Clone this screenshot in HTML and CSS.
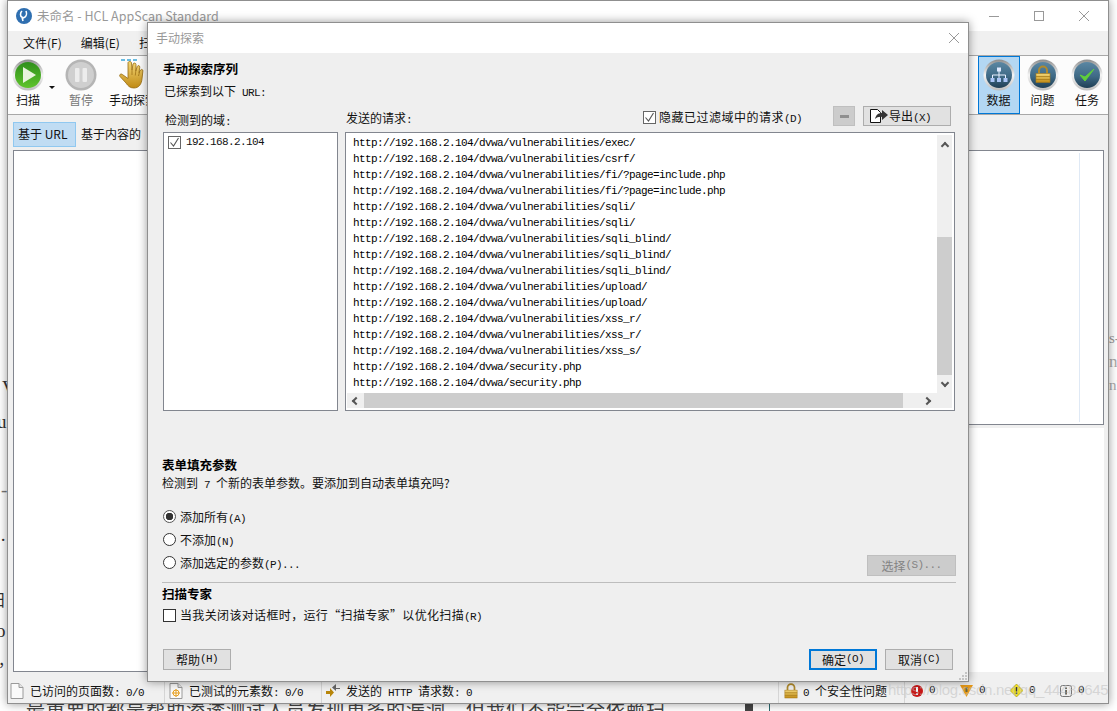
FILE: index.html
```html
<!DOCTYPE html>
<html lang="zh-CN">
<head>
    <meta charset="UTF-8">
    <title>手动探索 - HCL AppScan Standard</title>
    <link rel="stylesheet" href="styles.css">
</head>
<body>
    <svg class="defs" aria-hidden="true">
        <defs>
            <linearGradient id="ring" x1="0" y1="0" x2="0" y2="1">
                <stop offset="0" stop-color="#8d8d8d"/><stop offset="0.5" stop-color="#f4f4f4"/><stop offset="1" stop-color="#bdbdbd"/>
            </linearGradient>
            <linearGradient id="navy" x1="0" y1="0" x2="0" y2="1">
                <stop offset="0" stop-color="#5b87a3"/><stop offset="0.55" stop-color="#3f6a86"/><stop offset="1" stop-color="#1f3f55"/>
            </linearGradient>
            <linearGradient id="green" x1="0" y1="0" x2="0" y2="1">
                <stop offset="0" stop-color="#2f8f1c"/><stop offset="1" stop-color="#5fc42c"/>
            </linearGradient>
            <linearGradient id="gold" x1="0" y1="0" x2="0" y2="1">
                <stop offset="0" stop-color="#f4d777"/><stop offset="1" stop-color="#c08a14"/>
            </linearGradient>
            <symbol id="orb" viewBox="0 0 32 32">
                <circle cx="16" cy="16" r="15.5" fill="url(#ring)"/>
                <circle cx="16" cy="16" r="13" fill="url(#navy)"/>
            </symbol>
            <symbol id="lock" viewBox="0 0 16 18">
                <path d="M4 8V5a4 4 0 0 1 8 0v3" fill="none" stroke="#b08a2c" stroke-width="2"/>
                <rect x="1" y="8" width="14" height="9" fill="url(#gold)" stroke="#a87c1c" stroke-width="0.6"/>
                <path d="M1 11h14M1 14h14" stroke="#a87c1c" stroke-width="0.8"/>
            </symbol>
            <symbol id="page" viewBox="0 0 14 16">
                <path d="M1 .5h8l4 4v11H1z" fill="#fafafa" stroke="#9a9a9a"/>
                <path d="M9 .5v4h4" fill="#e4e4e4" stroke="#9a9a9a"/>
            </symbol>
        </defs>
    </svg>

    <span class="frag frag-v">V</span>
    <span class="frag frag-u">u</span>
    <span class="frag frag-dash">-</span>
    <span class="frag frag-dot">·</span>
    <span class="frag frag-sao">扫</span>
    <span class="frag frag-o">o</span>
    <span class="frag frag-comma">，</span>
    <span class="frag frag-r1">s-</span>
    <span class="frag frag-r2">n</span>
    <span class="frag frag-r3">n'</span>
    <span class="frag frag-bar"></span>
    <span class="frag frag-line"></span>
    <p class="article-line">，最重要的都是帮助渗透测试人员发现更多的漏洞，但我们不能完全依赖扫</p>

    <div class="window main-window">
        <div class="titlebar">
            <svg class="app-icon" width="16" height="16" viewBox="0 0 16 16">
                <circle cx="8" cy="8" r="8" fill="#2f6fb0"/>
                <path d="M6 3c-2 2-2 5 0 6l1 4M10 3c1 3 1 4-1 6l-2 1" fill="none" stroke="#fff" stroke-width="1.6"/>
            </svg>
            <span class="app-title">未命名 - HCL AppScan Standard</span>
            <div class="win-controls">
                <svg width="12" height="12" viewBox="0 0 12 12"><path d="M1 6.5h10" stroke="#999"/></svg>
                <svg width="12" height="12" viewBox="0 0 12 12"><rect x="1.500" y="1.500" width="9" height="9" fill="none" stroke="#999"/></svg>
                <svg width="12" height="12" viewBox="0 0 12 12"><path d="M1 1l10 10M11 1L1 11" stroke="#999"/></svg>
            </div>
        </div>

        <div class="menubar">
            <span>文件(F)</span>
            <span>编辑(E)</span>
            <span>扫描(S)</span>
        </div>

        <div class="toolbar">
            <div class="tool">
                <svg width="32" height="32" viewBox="0 0 32 32">
                    <circle cx="16" cy="16" r="15.500" fill="url(#ring)"/>
                    <circle cx="16" cy="16" r="13" fill="url(#green)"/>
                    <path d="M11 8l13 8-13 8z" fill="#e8f4dc"/>
                </svg>
                <span>扫描</span>
            </div>
            <span class="caret"></span>
            <div class="tool tool-off">
                <svg width="32" height="32" viewBox="0 0 32 32">
                    <circle cx="16" cy="16" r="15.500" fill="#b5b5b5"/>
                    <circle cx="16" cy="16" r="13" fill="#cfcfcf"/>
                    <rect x="10" y="9" width="4.500" height="14" rx="1" fill="#ececec"/>
                    <rect x="17.500" y="9" width="4.500" height="14" rx="1" fill="#ececec"/>
                </svg>
                <span>暂停</span>
            </div>
            <div class="tool tool-wide">
                <svg width="32" height="32" viewBox="0 0 32 32">
                    <path d="M4 1h4M10 1h4M16 1h4" stroke="#3aa7d8" stroke-width="1.400"/>
                    <path d="M11 4c0-2 3.500-2 3.500 0l.5 7 1-6c.5-1.500 3-1.200 3 .5l-.2 6.500 1.400-4.500c.6-1.500 2.800-1 2.600.7l-.8 5.300 1.500-2.500c.8-1.200 2.700-.5 2.400 1L25 20c-.5 5-3 9-8 9-4 0-6-2-8-5l-6-6.500c-1.200-1.500.8-3.300 2.400-2l5.600 4z" fill="url(#gold)" stroke="#96690f" stroke-width="0.800"/>
                    <path d="M15 11v5M18.800 12l-.5 4.500M22.500 13l-1 4" fill="none" stroke="#96690f" stroke-width="0.700"/>
                </svg>
                <span>手动探索</span>
            </div>
            <div class="tool-group">
                <div class="tool tool-active">
                    <svg width="32" height="32" viewBox="0 0 32 32">
                        <use href="#orb"/>
                        <path d="M16 12v3M9.500 19v-3h13v3M16 15v4" fill="none" stroke="#e8f0ff"/>
                        <rect x="14" y="8.500" width="4" height="4" fill="#dfe9ff"/>
                        <rect x="7.500" y="19" width="4" height="4" fill="#a9c4f5"/>
                        <rect x="14" y="19" width="4" height="4" fill="#a9c4f5"/>
                        <rect x="20.500" y="19" width="4" height="4" fill="#a9c4f5"/>
                    </svg>
                    <span>数据</span>
                </div>
                <div class="tool">
                    <svg width="32" height="32" viewBox="0 0 32 32">
                        <use href="#orb"/>
                        <use href="#lock" x="8" y="6" width="16" height="19"/>
                    </svg>
                    <span>问题</span>
                </div>
                <div class="tool">
                    <svg width="32" height="32" viewBox="0 0 32 32">
                        <use href="#orb"/>
                        <path d="M9 16l5 6 9-12-9 8z" fill="#5fd03a" stroke="#5fd03a"/>
                    </svg>
                    <span>任务</span>
                </div>
            </div>
        </div>

        <div class="tabs">
            <span class="tab tab-on">基于 URL</span>
            <span class="tab">基于内容的</span>
        </div>

        <div class="workspace">
            <div class="tree-pane"></div>
            <div class="detail-pane"><div class="detail-col"></div></div>
            <div class="report-pane"></div>
        </div>

        <div class="statusbar">
            <div class="stat stat-pages">
                <svg width="14" height="16"><use href="#page"/></svg>
                <span>已访问的页面数<span class="m">: 0/0</span></span>
            </div>
            <div class="stat stat-elements">
                <svg width="14" height="16" viewBox="0 0 14 16">
                    <use href="#page" width="14" height="16"/>
                    <circle cx="7" cy="10" r="3" fill="none" stroke="#e8a020"/>
                    <path d="M7 6v8M3 10h8" stroke="#e8a020"/>
                </svg>
                <span>已测试的元素数<span class="m">: 0/0</span></span>
            </div>
            <div class="stat stat-http">
                <svg width="14" height="14" viewBox="0 0 14 14">
                    <path d="M0 7h4V4l4 4.500-4 4.500v-3H0z" fill="#b8860b"/>
                    <path d="M14 4h-4V0L6 3.500 10 7V5h4z" fill="#666"/>
                </svg>
                <span>发送的<span class="m"> HTTP </span>请求数<span class="m">: 0</span></span>
            </div>
            <div class="stat stat-issues">
                <svg width="14" height="16"><use href="#lock" width="14" height="16"/></svg>
                <span><span class="m">0 </span>个安全性问题</span>
            </div>
            <div class="stat stat-counts">
                <svg width="12" height="12" viewBox="0 0 12 12"><circle cx="6" cy="6" r="6" fill="#c81818"/><path d="M6 2v5M6 8.500v1.500" stroke="#fff" stroke-width="2"/></svg>
                <span class="m">0</span>
                <svg width="13" height="12" viewBox="0 0 13 12"><path d="M0 0h13L6.500 12z" fill="#e89a18"/><path d="M6.500 2v5" stroke="#664" stroke-width="2"/></svg>
                <span class="m">0</span>
                <svg width="13" height="13" viewBox="0 0 13 13"><path d="M6.500 0L13 6.500 6.500 13 0 6.500z" fill="#f2e020" stroke="#998a10" stroke-width="0.600"/><path d="M6.500 3v4.500M6.500 8.500V10" stroke="#333" stroke-width="1.500"/></svg>
                <span class="m">0</span>
                <svg width="12" height="12" viewBox="0 0 12 12"><rect x="0.500" y="0.500" width="11" height="11" rx="2" fill="#eee" stroke="#777"/><path d="M6 2.500v1.500M6 5v4.500" stroke="#444" stroke-width="2"/></svg>
                <span class="m">0</span>
            </div>
        </div>
    </div>

    <div class="window dialog">
        <div class="dialog-title">
            <span>手动探索</span>
            <svg width="12" height="12" viewBox="0 0 12 12"><path d="M1 1l10 10M11 1L1 11" stroke="#999"/></svg>
        </div>

        <div class="dialog-body">
            <div class="sequence">
                <h3>手动探索序列</h3>
                <p class="found">已探索到以下<span class="m"> URL:</span></p>

                <div class="panes">
                    <div class="pane-left">
                        <div class="pane-label"><span>检测到的域<span class="m">:</span></span></div>
                        <div class="list domain-list">
                            <span class="check check-on"><svg width="11" height="11" viewBox="0 0 11 11"><path d="M1.500 5.500l3 3.500 5-8" fill="none" stroke="#555" stroke-width="1.100"/></svg></span>
                            <span class="m">192.168.2.104</span>
                        </div>
                    </div>
                    <div class="pane-right">
                        <div class="pane-head">
                            <span>发送的请求<span class="m">:</span></span>
                            <label class="hide-filter">
                                <span class="check check-on"><svg width="11" height="11" viewBox="0 0 11 11"><path d="M1.500 5.500l3 3.500 5-8" fill="none" stroke="#555" stroke-width="1.100"/></svg></span>
                                <span>隐藏已过滤域中的请求<span class="m">(D)</span></span>
                            </label>
                            <button class="minus-btn" type="button"><span></span></button>
                            <button class="btn export-btn" type="button">
                                <svg width="20" height="16" viewBox="0 0 20 16">
                                    <path d="M1.500 1.500h7l3 3v10h-10z" fill="#fff" stroke="#111"/>
                                    <path d="M6 11c1-4 3-6 7-6V2l6 5-6 5V9c-3-.5-5 .5-7 2z" fill="#333"/>
                                </svg>
                                <span>导出<span class="m">(X)</span></span>
                            </button>
                        </div>
                        <div class="list request-list">
                            <div class="rows" id="rows"></div>
                            <div class="vscroll">
                                <i class="arrow arrow-up"></i>
                                <div class="vthumb"></div>
                                <i class="arrow arrow-down"></i>
                            </div>
                            <div class="hscroll">
                                <i class="arrow arrow-left"></i>
                                <div class="hthumb"></div>
                                <i class="arrow arrow-right"></i>
                            </div>
                        </div>
                    </div>
                </div>
            </div>

            <h3 class="form-heading">表单填充参数</h3>
            <p class="line">检测到<span class="m"> 7 </span>个新的表单参数。要添加到自动表单填充吗?</p>

            <div class="radios">
                <div class="radio-row"><span class="radio radio-on"></span><span>添加所有<span class="m">(A)</span></span></div>
                <div class="radio-row"><span class="radio"></span><span>不添加<span class="m">(N)</span></span></div>
                <div class="radio-row">
                    <span class="radio"></span><span>添加选定的参数<span class="m">(P)...</span></span>
                    <button class="btn select-btn" type="button" disabled>选择<span class="m">(S)...</span></button>
                </div>
            </div>

            <hr class="rule">
            <h3 class="expert-heading">扫描专家</h3>
            <div class="expert-row">
                <span class="check"></span>
                <span class="expert-text">当我关闭该对话框时，运行“扫描专家”以优化扫描<span class="m">(R)</span></span>
            </div>

            <div class="dialog-foot">
                <button class="btn" type="button">帮助<span class="m">(H)</span></button>
                <button class="btn btn-default" type="button">确定<span class="m">(O)</span></button>
                <button class="btn" type="button">取消<span class="m">(C)</span></button>
            </div>
            <svg class="grip" width="9" height="9" viewBox="0 0 9 9">
                <path d="M7 1h2v2H7zM4 4h2v2H4zM7 4h2v2H7zM1 7h2v2H1zM4 7h2v2H4zM7 7h2v2H7z" fill="#c4c4c4"/>
            </svg>
        </div>
    </div>

    <span class="watermark">https://blog.csdn.net/qq_44484645</span>

    <script>
        const urls = [
            'exec/', 'csrf/', 'fi/?page=include.php', 'fi/?page=include.php',
            'sqli/', 'sqli/', 'sqli_blind/', 'sqli_blind/', 'sqli_blind/',
            'upload/', 'upload/', 'xss_r/', 'xss_r/', 'xss_s/'
        ];
        const rows = document.getElementById('rows');
        const base = 'http://192.168.2.104/dvwa/';
        urls.map(u => base + 'vulnerabilities/' + u)
            .concat([base + 'security.php', base + 'security.php'])
            .forEach(u => {
                const row = document.createElement('div');
                row.className = 'row';
                row.textContent = u;
                rows.appendChild(row);
            });
    </script>
</body>
</html>
```

FILE: styles.css
```css
* {
    box-sizing: border-box;
}
html, body {
    margin: 0;
    height: 100%;
}
body {
    position: relative;
    width: 1117px;
    height: 711px;
    overflow: hidden;
    background: #fff;
    color: #111;
    font-family: "Noto Sans CJK SC", "Noto Sans", sans-serif;
    font-size: 12px;
    line-height: 16px;
}
.defs {
    position: absolute;
    width: 0;
    height: 0;
}
h3, p {
    margin: 0;
}
/* Latin in the old dialogs: tall and 6px a character */
.m {
    font-family: "Liberation Mono", "DejaVu Sans Mono", monospace;
    font-size: 11px;
    line-height: 1;
    letter-spacing: -0.6px;
    white-space: pre;
}

/* bits of the page behind the windows */
.frag {
    position: absolute;
    font-family: "Liberation Serif", serif;
    font-size: 19px;
    line-height: 20px;
    color: #333;
}
.frag-v { left: 2px; top: 378px; }
.frag-u { left: -3px; top: 412px; }
.frag-dash { left: 1px; top: 480px; color: #777; }
.frag-dot { left: 0; top: 530px; }
.frag-sao { left: -12px; top: 589px; font-family: "Noto Sans CJK SC", sans-serif; font-size: 17px; }
.frag-o { left: -4px; top: 621px; }
.frag-comma { left: -2px; top: 650px; font-family: "Noto Sans CJK SC", sans-serif; font-size: 15px; }
.frag-r1 { left: 1109px; top: 328px; font-size: 15px; color: #999; }
.frag-r2 { left: 1109px; top: 352px; font-size: 17px; color: #aaa; }
.frag-r3 { left: 1109px; top: 375px; font-size: 15px; color: #aaa; }
.frag-bar { left: 745px; top: 700px; width: 8px; height: 11px; background: #444; }
.frag-line { left: 769px; top: 700px; width: 1px; height: 11px; background: #2c6a70; }
.article-line {
    position: absolute;
    left: 6px;
    top: 696px;
    white-space: nowrap;
    font-size: 19px;
    line-height: 26px;
    letter-spacing: 1px;
    color: #444;
}

/* windows on the desktop */
.window {
    position: absolute;
    display: flex;
    flex-direction: column;
    border: 1px solid #8f8f8f;
    box-shadow: 0 0 9px rgba(0, 0, 0, 0.4);
}
.main-window {
    left: 7px;
    top: 0;
    width: 1102px;
    height: 704px;
    background: #f0f0f0;
}
.dialog {
    left: 147px;
    top: 22px;
    width: 822px;
    height: 660px;
    background: #efefef;
}

/* main window */
.titlebar {
    display: flex;
    align-items: center;
    height: 30px;
    background: #fff;
    padding-left: 8px;
    flex: none;
}
.app-title {
    margin-left: 5px;
    color: #999;
    font-size: 12.500px;
}
.win-controls {
    display: flex;
    gap: 33px;
    margin-left: auto;
    padding-right: 18px;
}
.menubar {
    display: flex;
    gap: 19px;
    align-items: center;
    height: 25px;
    padding-left: 15px;
    border-bottom: 1px solid #a8a8a8;
    flex: none;
}
.toolbar {
    display: flex;
    height: 59px;
    background: #fcfcfc;
    border-bottom: 1px solid #a8a8a8;
    flex: none;
}
.tool {
    display: flex;
    flex-direction: column;
    align-items: center;
    width: 40px;
    height: 58px;
    padding-top: 3px;
    white-space: nowrap;
}
.tool svg {
    flex: none;
}
.tool span {
    margin-top: 1px;
}
.tool-off {
    margin-right: 8px;
}
.tool-off span {
    color: #777;
}
.tool-wide {
    width: 48px;
}
.caret {
    align-self: flex-start;
    width: 6px;
    height: 0;
    margin: 30px 6px 0 1px;
    border: 3px solid transparent;
    border-top: 3px solid #111;
    border-bottom: 0;
}
.tool-group {
    display: flex;
    gap: 2px;
    margin-left: auto;
}
.tool-group .tool {
    width: 42px;
}
.tool-group .tool:nth-child(2) {
    padding-right: 1px;
}
.tool-group .tool-active {
    padding-right: 1px;
}
.tool-active {
    background: #b3d7f3;
    border: 1px solid #0078d7;
    padding-top: 2px;
}
.tabs {
    display: flex;
    align-items: center;
    gap: 0;
    height: 34px;
    padding: 6px 0 2px 5px;
    flex: none;
}
.tab {
    display: flex;
    align-items: center;
    height: 25px;
    padding: 0 4px;
    border: 1px solid transparent;
}
.tab-on {
    width: 63px;
    background: #c0dcf3;
    border-color: #90c8f0;
}
.workspace {
    flex: 1;
    display: grid;
    grid-template-columns: 300px 1fr;
    grid-template-rows: 275px 1fr;
    row-gap: 3px;
    padding: 1px 4px 0 5px;
    min-height: 0;
}
.tree-pane {
    grid-row: 1 / 3;
    background: #fff;
    border: 1px solid #82868f;
}
.detail-pane {
    background: #fff;
    border: 1px solid #82868f;
    padding: 2px 23px 2px 0;
}
.detail-col {
    height: 100%;
    border-right: 1px solid #dfe9f5;
}
.report-pane {
    background: #fff;
}
.statusbar {
    display: flex;
    align-items: center;
    height: 31px;
    padding-top: 6px;
    flex: none;
}
.stat {
    display: flex;
    align-items: center;
    gap: 6px;
    height: 24px;
    padding-left: 2px;
    border-left: 1px solid #d5d5d5;
    white-space: nowrap;
}
.stat-pages { width: 156px; border-left: 0; }
.stat-elements { width: 157px; padding-left: 4px; }
.stat-http { width: 457px; padding-left: 4px; }
.stat-issues { width: 126px; padding-left: 5px; gap: 5px; }
.stat-counts { padding-left: 6px; gap: 6px; }
.stat-counts .m { margin-right: 19px; }

/* dialog */
.dialog-title {
    display: flex;
    align-items: center;
    justify-content: space-between;
    height: 30px;
    padding: 0 8px 0 8px;
    background: #fff;
    color: #999;
    font-size: 12px;
    flex: none;
}
.dialog-body {
    position: relative;
    flex: 1;
    display: flex;
    flex-direction: column;
    padding: 0 12px 11px 14px;
    min-height: 0;
}
.sequence {
    padding-left: 1px;
}
h3 {
    font-size: 12.500px;
    line-height: 16px;
    font-weight: 700;
    color: #000;
}
.sequence h3 {
    margin-top: 8px;
}
.found {
    height: 16px;
    margin-top: 6px;
    padding-left: 1px;
}
.panes {
    display: grid;
    grid-template-columns: 175px 610px;
    column-gap: 7px;
}
.pane-label {
    height: 33px;
    padding: 13px 0 0 2px;
}
.pane-head {
    display: flex;
    align-items: flex-start;
    height: 33px;
    padding: 7px 4px 0 1px;
}
.pane-head > span {
    margin-top: 4px;
}
.hide-filter {
    display: flex;
    align-items: center;
    gap: 3px;
    margin: 3px 31px 0 auto;
    letter-spacing: 0.5px;
}
.list {
    height: 279px;
    background: #fff;
    border: 1px solid #82868f;
}
.domain-list {
    display: flex;
    align-items: flex-start;
    gap: 5px;
    padding: 3px 0 0 4px;
}
.domain-list .m {
    line-height: 13px;
}
.check {
    display: inline-flex;
    align-items: center;
    justify-content: center;
    width: 13px;
    height: 13px;
    background: #fff;
    border: 1px solid #333;
    flex: none;
}
.check-on {
    border-color: #666;
}
.request-list {
    position: relative;
    padding: 2px 0 0 7px;
    overflow: hidden;
}
.row {
    height: 16px;
    line-height: 16px;
    font-family: "Liberation Mono", "DejaVu Sans Mono", monospace;
    font-size: 11px;
    letter-spacing: -0.6px;
    color: #000;
    white-space: nowrap;
}

/* scrollbars and small buttons lie over the list */
.vscroll {
    position: absolute;
    top: 2px;
    right: 2px;
    bottom: 17px;
    width: 15px;
    background: #efefef;
}
.vthumb {
    position: absolute;
    top: 102px;
    left: 0;
    width: 15px;
    height: 138px;
    background: #cdcdcd;
}
.hscroll {
    position: absolute;
    left: 1px;
    right: 2px;
    bottom: 2px;
    height: 15px;
    background: #efefef;
}
.hthumb {
    position: absolute;
    left: 17px;
    top: 0;
    width: 539px;
    height: 15px;
    background: #cdcdcd;
}
.arrow {
    position: absolute;
    width: 6px;
    height: 6px;
    border-top: 2px solid #555;
    border-left: 2px solid #555;
}
.arrow-up { top: 8px; left: 5px; transform: rotate(45deg); }
.arrow-down { bottom: 7px; left: 5px; transform: rotate(225deg); }
.arrow-left { left: 6px; top: 5px; transform: rotate(-45deg); }
.arrow-right { right: 22px; top: 5px; transform: rotate(135deg); }

.btn {
    display: inline-flex;
    align-items: center;
    justify-content: center;
    height: 21px;
    width: 68px;
    padding: 0;
    background: #e1e1e1;
    border: 1px solid #adadad;
    font: inherit;
    color: #111;
}
.minus-btn {
    display: flex;
    align-items: center;
    justify-content: center;
    width: 22px;
    height: 20px;
    padding: 0;
    background: #cccccc;
    border: 1px solid #bfbfbf;
}
.minus-btn span {
    width: 9px;
    height: 3px;
    background: #8f8f8f;
}
.export-btn {
    justify-content: flex-start;
    width: 88px;
    height: 20px;
    margin-left: 8px;
    padding-left: 5px;
    gap: 0;
}
.form-heading {
    margin-top: 46px;
}
.line {
    height: 16px;
    margin-top: 2px;
}
.radios {
    margin-top: 14px;
}
.radio-row {
    display: flex;
    align-items: center;
    gap: 4px;
    height: 23px;
    padding-left: 1px;
}
.radio {
    width: 13px;
    height: 13px;
    border: 1px solid #333;
    border-radius: 50%;
    background: #fff;
    flex: none;
}
.radio-on {
    border-color: #555;
    background: radial-gradient(circle, #333 0 3.500px, #fff 4px);
}
.select-btn {
    width: 89px;
    margin: 3px 0 -3px auto;
    background: #cccccc;
    border-color: #bfbfbf;
    color: #838383;
}
.rule {
    height: 1px;
    margin: 8px 0 0;
    border: 0;
    background: #bdbdbd;
}
.expert-heading {
    margin-top: 3px;
}
.expert-row {
    display: flex;
    align-items: center;
    gap: 4px;
    height: 16px;
    margin-top: 5px;
    padding-left: 1px;
}
.expert-text {
    letter-spacing: 0.35px;
}
.dialog-foot {
    display: flex;
    gap: 8px;
    margin-top: auto;
    padding: 0 3px 0 1px;
}
.dialog-foot .btn:first-child {
    margin-right: auto;
}
.btn-default {
    border: 2px solid #0078d7;
}
.grip {
    position: absolute;
    right: 1px;
    bottom: 1px;
}
.watermark {
    position: absolute;
    left: 888px;
    top: 681px;
    font-family: "Liberation Sans", sans-serif;
    font-size: 15px;
    line-height: 18px;
    letter-spacing: -0.3px;
    color: rgba(190, 190, 190, 0.55);
    white-space: nowrap;
}
```
